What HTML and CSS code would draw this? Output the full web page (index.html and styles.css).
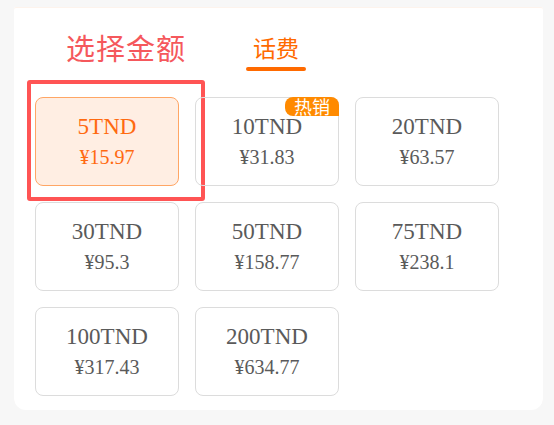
FILE: index.html
```html
<!DOCTYPE html>
<html lang="zh-CN">
  <head>
    <meta charset="UTF-8" />
    <meta name="viewport" content="width=device-width, initial-scale=1.0" />
    <title>选择金额</title>
    <link rel="stylesheet" href="styles.css">
  </head>
  <body>
    <div class="panel">
      <div class="header">
        <h1 class="title">选择金额</h1>
        <div class="tab">
          <span class="tab-label">话费</span>
          <span class="tab-line"></span>
        </div>
      </div>

      <div class="amounts">
        <div class="amount selected">
          <div class="amount-name">5TND</div>
          <div class="amount-price">¥15.97</div>
          <div class="highlight"></div>
        </div>
        <div class="amount">
          <div class="amount-name">10TND</div>
          <div class="amount-price">¥31.83</div>
          <span class="badge">热销</span>
        </div>
        <div class="amount">
          <div class="amount-name">20TND</div>
          <div class="amount-price">¥63.57</div>
        </div>
        <div class="amount">
          <div class="amount-name">30TND</div>
          <div class="amount-price">¥95.3</div>
        </div>
        <div class="amount">
          <div class="amount-name">50TND</div>
          <div class="amount-price">¥158.77</div>
        </div>
        <div class="amount">
          <div class="amount-name">75TND</div>
          <div class="amount-price">¥238.1</div>
        </div>
        <div class="amount">
          <div class="amount-name">100TND</div>
          <div class="amount-price">¥317.43</div>
        </div>
        <div class="amount">
          <div class="amount-name">200TND</div>
          <div class="amount-price">¥634.77</div>
        </div>
      </div>
    </div>
  </body>
</html>
```

FILE: styles.css
```css
body {
  margin: 0;
  background-color: #f7f7f7;
  font-family: "Noto Sans CJK SC", "Noto Sans", sans-serif;
}

.panel {
  width: 529px;
  height: 403px;
  box-sizing: border-box;
  margin: 7px 0 0 14px;
  padding: 0 21px;
  background-color: #fff;
  box-shadow: inset 0 1px 0 #fdf3ec;
  border-radius: 2px 2px 12px 12px;
}

.header {
  display: flex;
  align-items: flex-start;
  padding: 20px 0 0 31px;
  height: 45px;
}

.title {
  margin: 0;
  font-size: 29px;
  font-weight: 400;
  line-height: 40px;
  color: #f5585c;
  letter-spacing: 1px;
}

.tab {
  display: flex;
  flex-direction: column;
  align-items: center;
  width: 60px;
  margin-left: 60px;
}

.tab-label {
  font-size: 23px;
  line-height: 40px;
  color: #ff6a00;
}

.tab-line {
  width: 60px;
  height: 4px;
  border-radius: 2px;
  background-color: #ff6a00;
}

.amounts {
  display: grid;
  grid-template-columns: repeat(3, 144px);
  grid-auto-rows: 89px;
  gap: 16px;
  margin-top: 25px;
}

.amount {
  position: relative;
  display: flex;
  flex-direction: column;
  justify-content: center;
  align-items: center;
  box-sizing: border-box;
  border: 1px solid #dcdcdc;
  border-radius: 8px;
  font-family: "Liberation Serif", "Noto Sans CJK SC", serif;
  color: #5a5a5a;
}

.amount-name {
  font-size: 23px;
  line-height: 30px;
}

.amount-price {
  font-size: 20px;
  line-height: 30px;
}

.amount.selected {
  background-color: #ffeee3;
  border-color: #ffa665;
  color: #ff6a10;
}

.highlight {
  position: absolute;
  top: -18px;
  left: -9px;
  width: 178px;
  height: 121px;
  box-sizing: border-box;
  border: 4px solid #ff5454;
  border-radius: 3px;
}

.badge {
  position: absolute;
  top: -1px;
  right: -1px;
  width: 54px;
  height: 19px;
  background-color: #ff8a00;
  color: #fff;
  font-family: "Noto Sans CJK SC", sans-serif;
  font-size: 18px;
  line-height: 19px;
  text-align: center;
  border-radius: 8px 8px 0 8px;
}
```
